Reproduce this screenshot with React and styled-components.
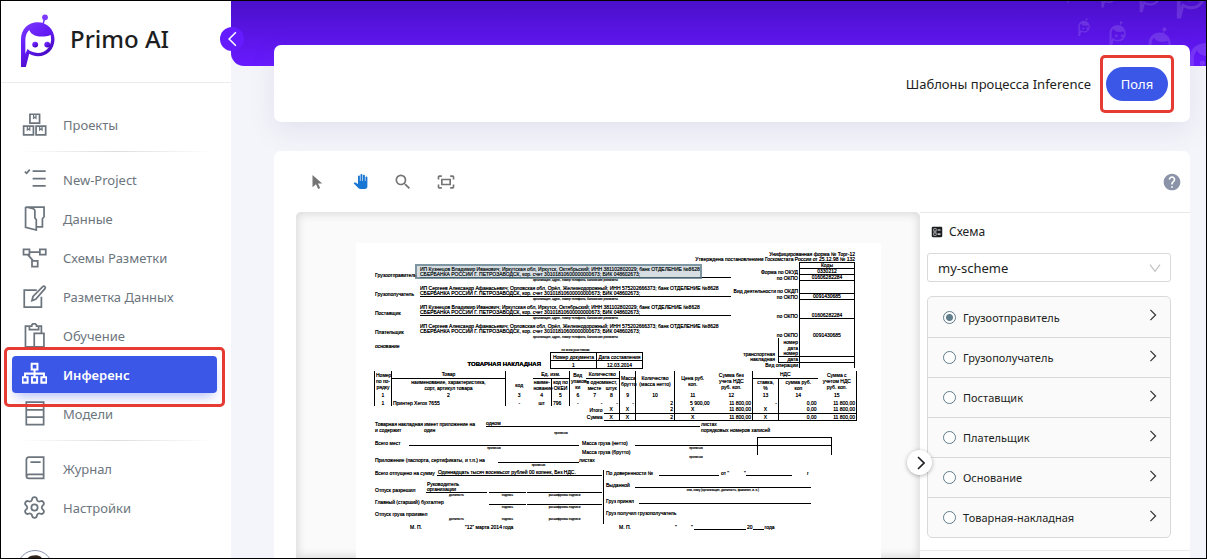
import React, { useState } from "react";
import styled, { createGlobalStyle, css } from "styled-components";
import { Settings } from "lucide-react";
import { MdBallot, MdHelp, MdOutlineFitScreen, MdPanTool, MdSearch } from "react-icons/md";

const Global = createGlobalStyle`
  *, *::before, *::after { box-sizing: border-box; }
  html, body { margin: 0; height: 100%; }
  body { font-family: "Noto Sans", "Open Sans", sans-serif; color: #1c1e21; }
  button, input, select { font: inherit; color: inherit; }
`;

/* ---------- Shell ---------- */
const Page = styled.div`
  display: flex;
  height: 100vh;
  overflow: hidden;
  border: 1px solid #000;
  background: #f4f5fa;
`;
const Sidebar = styled.aside`
  position: relative;
  flex: none;
  width: 230px;
  background: #fff;
`;
const Brand = styled.div`
  display: flex;
  align-items: center;
  gap: 15px;
  height: 82px;
  padding: 0 0 2px 19px;
  border-bottom: 1px solid #ececee;
`;
const BrandName = styled.span`
  padding-bottom: 4px;
  font-size: 24px;
  font-weight: 500;
`;
const CollapseButton = styled.button`
  position: absolute;
  z-index: 3;
  top: 26px;
  right: -13px;
  display: flex;
  align-items: center;
  justify-content: center;
  width: 24px;
  height: 24px;
  padding: 0;
  border: 0;
  border-radius: 50%;
  background: #651bff;
  color: #fff;
`;
const Menu = styled.nav`
  padding: 22px 14px 0 11px;
`;
const Separator = styled.hr`
  height: 1px;
  margin: 7px 4px 8px;
  border: 0;
  background: linear-gradient(90deg, transparent, #dcdde0, transparent);
`;
const callout = css`
  content: "";
  position: absolute;
  border: 3px solid #e53b33;
  border-radius: 5px;
  pointer-events: none;
`;
const MenuLink = styled.a`
  position: relative;
  display: flex;
  align-items: center;
  gap: 16px;
  height: ${(p) => (p.$active ? 37 : 39)}px;
  margin: ${(p) => (p.$active ? "1px 0" : "0")};
  padding-left: 10px;
  border-radius: 4px;
  font-size: 13px;
  line-height: 20px;
  text-decoration: none;
  color: #6c757d;
  ${(p) =>
    p.$active &&
    css`
      z-index: 1;
      background: #3b57e8;
      color: #fff;
      font-weight: 600;
      box-shadow: 0 7px 12px -4px rgba(59, 87, 232, 0.4);
      &::after {
        ${callout}
        inset: -9px -8px -14px;
      }
    `}
`;
const Avatar = styled.div`
  width: 36px;
  height: 36px;
  margin: 23px 0 0 5px;
`;
const Main = styled.main`
  flex: 1;
  min-width: 0;
  display: flex;
  flex-direction: column;
`;
const Banner = styled.div`
  position: relative;
  flex: none;
  height: 65px;
  overflow: hidden;
  border-bottom-left-radius: 13px;
  background: linear-gradient(#4b0fca, #681aff);
`;
const Watermark = styled.div`
  position: absolute;
  top: ${(p) => p.$top}px;
  right: ${(p) => p.$right}px;
  opacity: 0.13;
  svg { display: block; }
`;
const Content = styled.div`
  position: relative;
  flex: 1;
  min-height: 0;
  display: flex;
  flex-direction: column;
  gap: 29px;
  margin-top: -21px;
  padding: 0 16px 0 43px;
`;
const TitleBar = styled.header`
  flex: none;
  display: flex;
  align-items: center;
  justify-content: flex-end;
  gap: 15px;
  height: 77px;
  padding-right: 22px;
  border-radius: 7px;
  background: #fff;
  box-shadow: 0 8px 26px rgba(90, 90, 160, 0.12);
  font-size: 13px;
`;
const FieldsButton = styled.button`
  position: relative;
  width: 62px;
  height: 34px;
  padding: 0;
  border: 0;
  border-radius: 17px;
  background: #3b57e8;
  color: #fff;
  &::after {
    ${callout}
    inset: -12px -6px;
  }
`;
const Workspace = styled.section`
  flex: 1;
  min-height: 0;
  display: flex;
  flex-direction: column;
  border-radius: 7px 7px 0 0;
  background: #fff;
`;
const Toolbar = styled.div`
  flex: none;
  display: flex;
  align-items: center;
  gap: 23px;
  height: 61px;
  padding: 0 8px 0 33px;
`;
const ToolButton = styled.button`
  display: flex;
  align-items: center;
  justify-content: center;
  width: 20px;
  height: 20px;
  padding: 0;
  border: 0;
  background: none;
  color: ${(p) => (p.$active ? "#1976d2" : "#757575")};
`;
const HelpButton = styled(ToolButton)`
  margin-left: auto;
  color: #8b93a8;
`;
const Split = styled.div`
  flex: 1;
  min-height: 0;
  display: flex;
  padding-left: 22px;
`;
const Viewer = styled.div`
  flex: 1;
  min-width: 0;
  overflow: hidden;
  padding: 31px 39px 0 60px;
  border-top-left-radius: 5px;
  border-top-right-radius: 5px;
  background: #fafafa;
  box-shadow: inset 0 0 8px 2px rgba(0, 0, 0, 0.13);
`;
const SchemaPanel = styled.aside`
  position: relative;
  flex: none;
  width: 270px;
  border-top: 1px solid #e8e8ea;
`;
const PanelBody = styled.div`
  padding: 8px 19px 12px 7px;
  border-bottom: 1px solid #ececee;
`;
const PanelTitle = styled.h2`
  display: flex;
  align-items: center;
  gap: 5px;
  margin: 0 0 10px;
  padding-left: 3px;
  font-size: 12px;
  line-height: 22px;
  font-weight: 400;
`;
const SelectBox = styled.div`
  display: flex;
  align-items: center;
  height: 29px;
  margin-bottom: 14px;
  padding-right: 9px;
  border: 1px solid #d9d9d9;
  border-radius: 3px;
  color: #bfbfbf;
`;
const Select = styled.select`
  appearance: none;
  flex: 1;
  height: 27px;
  padding: 0 10px;
  border: 0;
  background: none;
  outline: 0;
  color: #1c1e21;
  font-size: 13px;
`;
const FieldList = styled.div`
  border: 1px solid #d9d9d9;
  border-radius: 5px;
  background: #fafafa;
`;
const FieldRow = styled.div`
  display: flex;
  align-items: center;
  justify-content: space-between;
  height: 40px;
  padding: 0 13px 0 15px;
  & + & { border-top: 1px solid #d9d9d9; }
`;
const RadioLabel = styled.label`
  display: flex;
  align-items: center;
  gap: 7px;
  font-size: 11px;
`;
const Radio = styled.input`
  appearance: none;
  width: 13px;
  height: 13px;
  margin: 0;
  border: 1px solid #607d8b;
  border-radius: 50%;
  background: #fff;
  &:checked {
    background: radial-gradient(circle, #607d8b 0 3px, #fff 4px);
  }
`;
const ExpandButton = styled.button`
  display: flex;
  padding: 0 0 4px;
  border: 0;
  background: none;
  color: #333;
`;
const PanelToggle = styled.button`
  position: absolute;
  top: 237px;
  left: -13px;
  display: flex;
  align-items: center;
  justify-content: center;
  width: 25px;
  height: 25px;
  padding: 0 0 0 3px;
  border: 0;
  border-radius: 50%;
  background: #fff;
  box-shadow: 0 1px 4px rgba(0, 0, 0, 0.3);
`;

/* ---------- Document sheet ---------- */
const Sheet = styled.article`
  position: relative;
  width: 525px;
  height: 360px;
  padding: 9px 26px 0 18px;
  background: #fff;
  color: #000;
  font-family: "Liberation Sans", Arial, sans-serif;
  font-size: 5px;
  line-height: 6px;
  white-space: nowrap;
  text-shadow: 0 0 #000;
`;
const FormNote = styled.div`
  line-height: 5px;
  text-align: right;
`;
const SheetHead = styled.div`
  display: flex;
  justify-content: space-between;
  height: 109px;
`;
const Parties = styled.div`
  width: 357px;
  padding-top: 5px;
`;
const Party = styled.div`
  display: flex;
  align-items: flex-start;
  height: 19px;
`;
const PartyName = styled.div`
  width: 46px;
  padding: 5px 0 0 1px;
`;
const Blank = styled.div`
  flex: none;
  width: ${(p) => p.$w}px;
  height: ${(p) => p.$h || 6}px;
  padding-left: ${(p) => p.$pad || 0}px;
  border-bottom: ${(p) => (p.$bare ? "0" : "1px solid #000")};
  line-height: 5px;
`;
const Caption = styled.small`
  display: block;
  font-size: 3px;
  line-height: 4px;
  text-align: center;
`;
const Captioned = styled.div`
  flex: none;
  width: ${(p) => p.$w}px;
  margin-left: ${(p) => p.$gap || 0}px;
`;
const Selection = styled.div`
  position: absolute;
  top: 21px;
  left: 59px;
  width: 287px;
  height: 15px;
  border: 2px solid rgba(96, 125, 139, 0.75);
  background: rgba(96, 125, 139, 0.25);
`;
const Codes = styled.table`
  align-self: flex-start;
  border-collapse: collapse;
  line-height: 5px;
  text-align: right;
  td, th { padding: 0 1px; font-weight: 400; vertical-align: bottom; }
  td { width: 55px; border: solid #000; border-width: 0 1px; text-align: center; }
`;
const CodeRow = styled.tr`
  height: ${(p) => p.$h}px;
  td { border-bottom-width: ${(p) => (p.$line ? 1 : 0)}px; }
  &:first-child td { border-top-width: 1px; }
`;
const Waybill = styled.div`
  display: flex;
  flex-direction: column;
  justify-content: center;
  padding: 0 2px;
`;
const TitleLine = styled.div`
  display: flex;
  align-items: flex-end;
  height: 18px;
`;
const SheetTitle = styled.h3`
  width: 176px;
  margin: 0;
  padding: 0 9px 3px 0;
  font-size: 6px;
  text-align: right;
`;
const NumberTable = styled.table`
  margin-bottom: 1px;
  border-collapse: collapse;
  td, th {
    width: 46px;
    height: 8px;
    padding: 0;
    border: 1px solid #000;
    font-weight: 400;
    text-align: center;
  }
`;
const Goods = styled.table`
  table-layout: fixed;
  width: 482px;
  border-collapse: collapse;
  text-align: center;
  td, th { padding: 0 1px; font-weight: 400; }
`;
const GoodsRow = styled.tr`
  height: ${(p) => p.$h}px;
`;
const Cell = styled.td`
  border: 0 solid #000;
  border-width: ${(p) => (p.$t ? 1 : 0)}px ${(p) => (p.$r ? 1 : 0)}px ${(p) => (p.$b ? 1 : 0)}px
    ${(p) => (p.$l ? 1 : 0)}px;
  text-align: ${(p) => p.$align || "center"};
`;
const Line = styled.div`
  display: flex;
  align-items: flex-start;
  height: ${(p) => p.$h}px;
  padding-left: 1px;
`;
const Text = styled.span`
  flex: none;
  width: ${(p) => (p.$w ? p.$w + "px" : "auto")};
  margin-left: ${(p) => p.$gap || 0}px;
  padding-top: ${(p) => p.$top || 0}px;
`;
const WeightBox = styled.div`
  width: 75px;
  height: 18px;
  border: 1px solid #000;
  border-bottom: 0;
  &::before { content: ""; display: block; height: 8px; border-bottom: 1px solid #000; }
`;
const Weights = styled.div`
  display: flex;
  height: 20px;
`;
const Sign = styled.div`
  display: flex;
`;
const SignLeft = styled.div`
  width: 230px;
  height: 54px;
  border-right: 1px solid #000;
`;
const SignRight = styled.div`
  padding-left: 1px;
`;

/* ---------- Drawings ---------- */
function Robot({ width, mono }) {
  const body = mono ? "#fff" : "url(#robot-body)";
  return (
    <svg width={width} viewBox="0 0 36 55" fill="none" aria-hidden="true">
      <defs>
        <linearGradient id="robot-body" x1="0" y1="0" x2="0.6" y2="1">
          <stop offset="0" stopColor="#7d3bff" />
          <stop offset="0.5" stopColor="#641bf5" />
          <stop offset="1" stopColor="#3f05b4" />
        </linearGradient>
      </defs>
      <path d="M25.6 4 23.4 11" stroke={mono ? "#fff" : "#7432f8"} strokeWidth="1.6" />
      <circle cx="25.7" cy="3.4" r="3" fill={mono ? "#fff" : "#7d3bff"} />
      <path
        fillRule="evenodd"
        fill={body}
        d="M1 54.500V26C1 16 8.500 8.500 18 8.500S35.500 16 35.500 26 28 43.500 18.500 43.500C15 43.500 12 42.500 9.500 41L6 54.500ZM9.500 16.500C6.500 19.500 5.500 23 5.500 27V41L7.800 36C10.500 38.500 14 40 18.500 40 26 40 31.500 34.500 32 26.500L31.600 21.500C24 24.500 12 24 9.500 16.500Z"
      />
      <circle cx="15.600" cy="31.500" r="3" fill={body} />
      <circle cx="28" cy="31.500" r="3" fill={body} />
    </svg>
  );
}

function Chevron({ dir = "right", w = 8, h = 14, stroke = 1.4 }) {
  const d = { right: "M1 1 7 7 1 13", left: "M7 1 1 7 7 13", down: "M1 2 7 10 13 2" }[dir];
  return (
    <svg width={w} height={h} viewBox={dir === "down" ? "0 0 14 12" : "0 0 8 14"} fill="none" stroke="currentColor" strokeWidth={stroke} aria-hidden="true">
      <path d={d} />
    </svg>
  );
}

const glyphs = {
  projects: (
    <>
      <path d="M7.800 2.200h9.400v8.600H7.800zM1.600 13.800h9.600v8.600H1.600zM13.800 13.800h9.400v8.600h-9.400z" />
      <path d="M11.300 2.500v3.600l1.200-1 1.200 1V2.500M5.200 14v3.600l1.200-1 1.200 1V14M17.300 14v3.600l1.200-1 1.200 1V14" strokeWidth="1.200" />
    </>
  ),
  tasks: <path d="M2.800 4.600 4.500 6.200 7.600 2.600M10.400 4h12.800M10.400 11.400h12.800M10.400 18.600h12.800" />,
  data: <path d="M3.500 1V21L14 23.500V13.500L12.600 11.500V4.500C12.600 3.500 11.500 2.800 10.200 2.400L3.500 1H21.600V10.500L20 12.500V20.500H14" />,
  schema: <path d="M1.500 4.300h5.800v5.200H1.500zM17.500 4.300h5.800v5.200h-5.800zM9.800 15.600h5.600v5.600H9.800zM7.300 6.900h10.200M5.600 9.500l5.400 6.100" />,
  edit: <path d="M14.500 6H2.200V22.600H19V12.500M9.800 16.200l1-4L20.300 2.600c1.600-1.200 3.300.4 2.200 2L13.400 14.900Z" />,
  training: <path d="M8 3H3.400V23.300H12M16.500 3H19V9.300M7.300 3v3.600h9V3H14.300A2.400 2.400 0 0 0 9.500 3ZM12 10.200h9.500V23.300H12z" />,
  inference: <path strokeWidth="2" d="M9.500 1.800h5.600v5.600H9.500zM12.300 7.400v7.300M3 14.700v-3.300h18.500v3.300M.5 14.900h5v5.300h-5zM9.800 14.900h5v5.300h-5zM19 14.900h5v5.300h-5z" />,
  models: <path d="M4.200 1.200h17v22h-17zM4.200 8.600h17M4.200 15.800h17" />,
  journal: <path d="M21.200 1.200H6.800C5.300 1.200 4.300 2.200 4.300 3.700V19.600C4.300 21 5.300 22 6.800 22H21.200ZM21 18H6.800C5.300 18 4.500 18.800 4.500 20M8.300 6h10" />,
};

function MenuIcon({ name }) {
  if (name === "settings") return <Settings size={25} strokeWidth={1.7} />;
  return (
    <svg width="25" height="25" viewBox="0 0 24.500 24.500" fill="none" stroke="currentColor" strokeWidth="1.700" aria-hidden="true">
      {glyphs[name]}
    </svg>
  );
}

/* ---------- Data ---------- */
const menuGroups = [
  [["projects", "Проекты"]],
  [
    ["tasks", "New-Project"],
    ["data", "Данные"],
    ["schema", "Схемы Разметки"],
    ["edit", "Разметка Данных"],
    ["training", "Обучение"],
    ["inference", "Инференс"],
    ["models", "Модели"],
  ],
  [
    ["journal", "Журнал"],
    ["settings", "Настройки"],
  ],
];
const fields = ["Грузоотправитель", "Грузополучатель", "Поставщик", "Плательщик", "Основание", "Товарная-накладная"];
const watermarks = [
  [-12, 130, 9], [-16, 90, 15], [-22, 45, 22], [-28, 0, 30],
  [17, 116, 12], [20, 80, 17], [26, 35, 23], [35, -14, 31],
];
const bank = "СБЕРБАНКА РОССИИ Г. ПЕТРОЗАВОДСК, кор. счет 30101810600000000673; БИК 048602673;";
const sender = "ИП Кузнецов Владимир Иванович; Иркутская обл, Иркутск, Октябрьский; ИНН 381102802029; банк ОТДЕЛЕНИЕ №8628";
const receiver = "ИП Сергеев Александр Афанасьевич; Орловская обл, Орёл, Железнодорожный; ИНН 575202666373; банк ОТДЕЛЕНИЕ №8628";
const parties = [
  ["Грузоотправитель", sender],
  ["Грузополучатель", receiver],
  ["Поставщик", sender],
  ["Плательщик", receiver],
];
const columns = [17, 114, 27, 19, 18, 16, 18, 16, 16, 39, 36, 42, 26, 39, 39];

function SheetCodes() {
  return (
    <Codes>
      <tbody>
        <CodeRow $h={5} $line><th colSpan={2} /><td>Коды</td></CodeRow>
        <CodeRow $h={6} $line><th colSpan={2}>Форма по ОКУД</th><td>0330212</td></CodeRow>
        <CodeRow $h={5} $line><th colSpan={2}>по ОКПО</th><td>01606282284</td></CodeRow>
        <CodeRow $h={13} $line><th colSpan={2}>Вид деятельности по ОКДП</th><td /></CodeRow>
        <CodeRow $h={5} $line><th colSpan={2}>по ОКПО</th><td>0091430685</td></CodeRow>
        <CodeRow $h={19} $line><th colSpan={2}>по ОКПО</th><td>01606282284</td></CodeRow>
        <CodeRow $h={19}><th colSpan={2}>по ОКПО</th><td>0091430685</td></CodeRow>
        <CodeRow $h={7}>
          <th rowSpan={4}><Waybill><span>транспортная</span><span>накладная</span></Waybill></th>
          <Cell as="th" $l $align="right">номер</Cell><td />
        </CodeRow>
        <CodeRow $h={6}><Cell as="th" $l $align="right">дата</Cell><td /></CodeRow>
        <CodeRow $h={5} $line><Cell as="th" $l $b $align="right">номер</Cell><td /></CodeRow>
        <CodeRow $h={5} $line><Cell as="th" $l $b $align="right">дата</Cell><td /></CodeRow>
        <CodeRow $h={6}><th colSpan={2}>Вид операции</th><td /></CodeRow>
      </tbody>
    </Codes>
  );
}

function GoodsTable() {
  return (
    <Goods>
      <colgroup>{columns.map((w, i) => <col key={i} style={{ width: w }} />)}</colgroup>
      <thead>
        <GoodsRow $h={7}>
          <Cell as="th" rowSpan={2} $l $r>Номер<br />по по-<br />рядку</Cell>
          <Cell as="th" $r $b>Товар</Cell>
          <Cell as="th" />
          <Cell as="th" colSpan={2} $r $b>Ед. изм.</Cell>
          <Cell as="th" rowSpan={2}>Вид<br />упаков-<br />ки</Cell>
          <Cell as="th" colSpan={2} $r $b>Количество</Cell>
          <Cell as="th" rowSpan={2} $r>Масса<br />брутто</Cell>
          <Cell as="th" rowSpan={2} $r>Количество<br />(масса нетто)</Cell>
          <Cell as="th" rowSpan={2}>Цена руб.<br />коп.</Cell>
          <Cell as="th" rowSpan={2} $r>Сумма без<br />учета НДС<br />руб. коп.</Cell>
          <Cell as="th" colSpan={2} $b>НДС</Cell>
          <Cell as="th" rowSpan={2} $r>Сумма с<br />учетом НДС<br />руб. коп.</Cell>
        </GoodsRow>
        <GoodsRow $h={13}>
          <Cell as="th" $r>наименование, характеристика,<br />сорт, артикул товара</Cell>
          <Cell as="th">код</Cell>
          <Cell as="th" $r>наиме-<br />нование</Cell>
          <Cell as="th" $r>код по<br />ОКЕИ</Cell>
          <Cell as="th">в одном<br />месте</Cell>
          <Cell as="th" $r>мест,<br />штук</Cell>
          <Cell as="th" $r>ставка,<br />%</Cell>
          <Cell as="th">сумма руб.<br />коп</Cell>
        </GoodsRow>
      </thead>
      <tbody>
        <GoodsRow $h={8}>
          {columns.map((_, i) => (
            <Cell key={i} $l={i === 0} $r={![2, 5, 6, 10, 13].includes(i)}>{i + 1}</Cell>
          ))}
        </GoodsRow>
        <GoodsRow $h={7}>
          {["1", "Принтер Xerox 7655", "-", "шт", "796", "-", "-", "-", "-", "2", "5 900,00", "11 800,00", "-", "0,00", "11 800,00"].map((t, i) => (
            <Cell key={i} $l={i === 0} $r={![2, 5, 6, 10, 13].includes(i)} $align={i === 1 || i === 4 ? "left" : i > 5 ? "right" : "center"}>{t}</Cell>
          ))}
        </GoodsRow>
        {["Итого", "Сумма"].map((name) => (
          <GoodsRow $h={7} key={name}>
            <Cell colSpan={7} $align="right">{name}</Cell>
            <Cell $b $r>X</Cell>
            <Cell $b $r>X</Cell>
            <Cell $b $r $align="right">2</Cell>
            <Cell $b>X</Cell>
            <Cell $b $r $align="right">11 800,00</Cell>
            <Cell $b $r>X</Cell>
            <Cell $b $align="right">0,00</Cell>
            <Cell $b $r $align="right">11 800,00</Cell>
          </GoodsRow>
        ))}
      </tbody>
    </Goods>
  );
}

function Signature({ w, gap, children, bare, h = 6 }) {
  return (
    <Captioned $w={w} $gap={gap}>
      <Blank $h={h} $w={w} $bare={bare} />
      <Caption>{children}</Caption>
    </Captioned>
  );
}

function DocumentSheet() {
  return (
    <Sheet>
      <FormNote>
        Унифицированная форма № Торг-12<br />
        Утверждена постановлением Госкомстата России от 25.12.98 № 132
      </FormNote>
      <SheetHead>
        <Parties>
          {parties.map(([name, details]) => (
            <Party key={name}>
              <PartyName>{name}</PartyName>
              <Captioned $w={311}>
                <Blank $h={11} $bare={name === "Плательщик"}>{details}<br />{bank}</Blank>
                <Caption>организация, адрес, номер телефона, банковские реквизиты</Caption>
              </Captioned>
            </Party>
          ))}
          <Line $h={5}>основание</Line>
          <Captioned $w={311} $gap={46}><Caption>по всем участникам</Caption></Captioned>
          <TitleLine>
            <SheetTitle>ТОВАРНАЯ НАКЛАДНАЯ</SheetTitle>
            <NumberTable>
              <tbody>
                <tr><th>Номер документа</th><th>Дата составления</th></tr>
                <tr><td>1</td><td>12.03.2014</td></tr>
              </tbody>
            </NumberTable>
          </TitleLine>
        </Parties>
        <SheetCodes />
      </SheetHead>
      <GoodsTable />
      <Line $h={6}>
        <Text $w={111}>Товарная накладная имеет приложение на</Text>
        <Blank $w={214}>одном</Blank>
        <Text $gap={1}>листах</Text>
      </Line>
      <Line $h={10}>
        <Text $w={49}>и содержит</Text>
        <Text $w={130}>один</Text>
        <Captioned $w={14}><Blank $w={14} $h={4} $bare /><Caption>прописью</Caption></Captioned>
        <Text $gap={133}>порядковых номеров записей</Text>
      </Line>
      <Weights>
        <div>
          <Line $h={10}>
            <Text $top={3} $w={34}>Всего мест</Text>
            <Signature w={170} h={9}>прописью</Signature>
            <Text $top={3} $gap={3} $w={53}>Масса груза (нетто)</Text>
            <Signature w={122} h={9}>прописью</Signature>
          </Line>
          <Line $h={10}>
            <Text $top={2} $gap={207} $w={53}>Масса груза (брутто)</Text>
            <Signature w={122} h={8} bare>прописью</Signature>
          </Line>
        </div>
        <WeightBox />
      </Weights>
      <Line $h={13}>
        <Text $w={123}>Приложение (паспорта, сертификаты, и т.п.) на</Text>
        <Signature w={81}>прописью</Signature>
        <Text>листах</Text>
      </Line>
      <Sign>
        <SignLeft>
          <Line $h={12}>
            <Text $w={62}>Всего отпущено на сумму</Text>
            <Blank $w={165} $pad={1}>Одиннадцать тысяч восемьсот рублей 00 копеек, Без НДС.</Blank>
          </Line>
          <Line $h={17}>
            <Text $top={5} $w={51}>Отпуск разрешил</Text>
            <Captioned $w={61}><Blank $h={11} $w={61} $pad={1}>Руководитель<br />организации</Blank><Caption>должность</Caption></Captioned>
            <Signature w={37} gap={2} h={11}>подпись</Signature>
            <Signature w={75} gap={1} h={11}>расшифровка подписи</Signature>
          </Line>
          <Line $h={12}>
            <Text $w={114}>Главный (старший) бухгалтер</Text>
            <Signature w={37}>подпись</Signature>
            <Signature w={75} gap={1}>расшифровка подписи</Signature>
          </Line>
          <Line $h={12}>
            <Text $w={51}>Отпуск груза произвел</Text>
            <Signature w={61} bare>должность</Signature>
            <Signature w={37} gap={2} bare>подпись</Signature>
            <Signature w={75} gap={1} bare>расшифровка подписи</Signature>
          </Line>
        </SignLeft>
        <SignRight>
          <Line $h={12}>
            <Text $w={53}>По доверенности №</Text>
            <Blank $w={60} />
            <Text $gap={2} $w={23}>от "</Text>
            <Text $w={2}>"</Text>
            <Blank $w={46} />
            <Text $gap={15}>г</Text>
          </Line>
          <Line $h={16}>
            <Text $w={29}>Выданной</Text>
            <Signature w={176}>кем, кому (организация, должность, фамилия, и. о.)</Signature>
          </Line>
          <Line $h={12}>
            <Text $w={33}>Груз принял</Text>
            <Blank $w={172} />
          </Line>
          <Line $h={10}>Груз получил грузополучатель</Line>
        </SignRight>
      </Sign>
      <Line $h={8}>
        <Text $gap={35} $w={55}>М. П.</Text>
        <Text $w={154}>"12" марта 2014 года</Text>
        <Text $w={56}>М. П.</Text>
        <Text $w={16}>"</Text>
        <Text $w={3}>"</Text>
        <Blank $w={52} />
        <Text $gap={1}>20</Text>
        <Blank $w={11} />
        <Text $gap={1}>года</Text>
      </Line>
      <Selection />
    </Sheet>
  );
}

export default function App() {
  const [selected, setSelected] = useState(fields[0]);
  return (
    <>
      <Global />
      <Page>
        <Sidebar>
          <Brand><Robot width={35} /><BrandName>Primo AI</BrandName></Brand>
          <CollapseButton aria-label="Свернуть меню"><Chevron dir="left" w={9} h={16} /></CollapseButton>
          <Menu>
            {menuGroups.map((group, i) => (
              <React.Fragment key={i}>
                {i > 0 && <Separator />}
                {group.map(([icon, label]) => (
                  <MenuLink key={icon} href={"#" + icon} $active={icon === "inference"}>
                    <MenuIcon name={icon} />
                    {label}
                  </MenuLink>
                ))}
              </React.Fragment>
            ))}
            <Avatar>
              <svg width="36" height="36" viewBox="0 0 36 36" aria-hidden="true">
                <circle cx="18" cy="18" r="17.500" fill="#fff" stroke="#8790b0" />
                <path d="M10 16C8 9 12 5 17 5.500 22 4 28 8 26 16Z" fill="#33251f" />
              </svg>
            </Avatar>
          </Menu>
        </Sidebar>
        <Main>
          <Banner>
            {watermarks.map(([top, right, w]) => (
              <Watermark key={right} $top={top} $right={right}><Robot width={w} mono /></Watermark>
            ))}
          </Banner>
          <Content>
            <TitleBar>
              Шаблоны процесса Inference
              <FieldsButton>Поля</FieldsButton>
            </TitleBar>
            <Workspace>
              <Toolbar>
                <ToolButton aria-label="Выбор">
                  <svg width="12" height="16" viewBox="0 0 12 16" fill="currentColor" aria-hidden="true">
                    <path d="M1.500 1 11.200 9.400H7L9.200 13.900 7.200 14.900 5 10.300 1.500 13.300Z" />
                  </svg>
                </ToolButton>
                <ToolButton aria-label="Перемещение" $active><MdPanTool size={15} /></ToolButton>
                <ToolButton aria-label="Масштаб"><MdSearch size={20} /></ToolButton>
                <ToolButton aria-label="По размеру экрана"><MdOutlineFitScreen size={22} /></ToolButton>
                <HelpButton aria-label="Справка"><MdHelp size={22} /></HelpButton>
              </Toolbar>
              <Split>
                <Viewer><DocumentSheet /></Viewer>
                <SchemaPanel>
                  <PanelBody>
                    <PanelTitle><MdBallot size={14} />Схема</PanelTitle>
                    <SelectBox>
                      <Select aria-label="Схема" defaultValue="my-scheme">
                        <option>my-scheme</option>
                      </Select>
                      <Chevron dir="down" w={12} h={10} />
                    </SelectBox>
                    <FieldList role="radiogroup" aria-label="Поля схемы">
                      {fields.map((name) => (
                        <FieldRow key={name}>
                          <RadioLabel>
                            <Radio type="radio" name="field" checked={selected === name} onChange={() => setSelected(name)} />
                            {name}
                          </RadioLabel>
                          <ExpandButton aria-label={"Открыть: " + name}><Chevron h={12} /></ExpandButton>
                        </FieldRow>
                      ))}
                    </FieldList>
                  </PanelBody>
                  <PanelToggle aria-label="Скрыть панель"><Chevron stroke={1.600} /></PanelToggle>
                </SchemaPanel>
              </Split>
            </Workspace>
          </Content>
        </Main>
      </Page>
    </>
  );
}
